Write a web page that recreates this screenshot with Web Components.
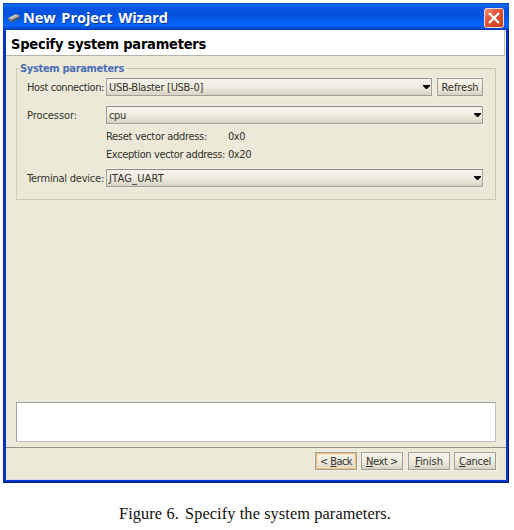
<!DOCTYPE html>
<html lang="en">
<head>
<meta charset="utf-8">
<title>New Project Wizard</title>
<style>
html,body{margin:0;background:#fff}
body{width:514px;height:530px;overflow:hidden}
</style>
</head>
<body>
<wizard-page></wizard-page>
<script>
const define = (name, html, init) => {
  const t = document.createElement('template');
  t.innerHTML = html;
  customElements.define(name, class extends HTMLElement {
    constructor() {
      super();
      this.attachShadow({mode: 'open'}).append(t.content.cloneNode(true));
    }
    connectedCallback() { if (init) init.call(this); }
  });
};

// A single-line label whose letter spacing is adjusted to fill the width in "w".
define('fit-label', `<style>
:host{display:block;white-space:pre;flex:none}
span{display:inline-block}
</style><span><slot></slot></span>`, function () {
  const w = +this.getAttribute('w');
  const s = this.shadowRoot.querySelector('span');
  this.style.width = w + 'px';
  const n = this.textContent.length;
  s.style.letterSpacing = (w - s.getBoundingClientRect().width) / n + 'px';
});

define('title-bar', `<style>
:host{display:flex;align-items:center;box-sizing:border-box;height:27px;padding:0 5px 0 5px;border-radius:2px 2px 0 0;
background:linear-gradient(#0646c8 0,#1768f0 2px,#0657e4 5px,#0450dc 11px,#055cf0 17px,#0666ff 22px,#0558e8 24px,#0138b5 27px);
color:#fff;font:bold 14.5px/22px "Open Sans","Noto Sans",sans-serif;word-spacing:2px;text-shadow:1px 1px 0 #0d3a9a}
.icon{flex:none;margin:1px 3px 0 0}
slot{display:block;padding-top:2px}
.close{flex:none;margin:2px 0 0 auto}
</style>
<svg class="icon" width="12" height="9" viewBox="0 0 12 9"><path d="M0 5L8 1L12 3L4 7Z" fill="#b5afa9"/><path d="M0 5L4 7V9L0 7Z" fill="#7c6f68"/><path d="M4 7L12 3V5L4 9Z" fill="#55535b"/><path d="M2 5L8 2" stroke="#e4e0dc" stroke-width=".8"/></svg>
<slot></slot>
<svg class="close" width="20" height="20" viewBox="0 0 20 20"><defs><linearGradient id="r" x2="1" y2="1"><stop stop-color="#f0947a"/><stop offset=".4" stop-color="#e0583a"/><stop offset="1" stop-color="#c83c14"/></linearGradient></defs><rect x=".5" y=".5" width="19" height="19" rx="2" fill="url(#r)" stroke="#f3dcdc"/><path d="M5 5L15 15M15 5L5 15" stroke="#fff" stroke-width="2.4"/></svg>`);

define('combo-box', `<style>
:host{display:flex;align-items:center;box-sizing:border-box;height:18px;border:1px solid #a3a197;border-top-color:#8f8d85;padding:0 1px 0 2px;box-shadow:0 0 0 1px #f1eee2;
background:linear-gradient(#f6f4ec,#f0ede2 45%,#e7e3d5 70%,#d6d2c5)}
svg{margin-left:auto;flex:none}
</style><slot></slot><svg width="7" height="4" viewBox="0 0 7 4"><path d="M0 0H7V1L4 4H3L0 1Z" fill="#000"/></svg>`);

define('push-button', `<style>
:host{display:flex;align-items:center;justify-content:center;box-sizing:border-box;height:18px;border:1px solid #a3a197;box-shadow:0 0 0 1px #f1eee2;
background:linear-gradient(#f6f4ec,#efece1 45%,#e5e1d3 75%,#d3cfc1)}
:host([focused]){box-shadow:0 0 0 1px #f1eee2,inset 0 0 0 1px #e9c184,inset 0 0 0 2px #f3dfb8}
</style><slot></slot>`);

define('group-box', `<style>
:host{display:block;position:relative;box-sizing:border-box;border:1px solid #c9c6b5;border-left-color:#cfd0bc}
.legend{position:absolute;left:2px;top:-7px;padding:0 2px 0 1px;background:#ece9d8;color:#4a6fb5;font:bold 11px/14px "DejaVu Sans Condensed","DejaVu Sans",sans-serif}
</style><div class="legend"><slot name="legend"></slot></div><slot></slot>`);

define('wizard-window', `<style>
:host{display:flex;flex-direction:column;box-sizing:border-box;width:506px;height:480px;background:linear-gradient(#05153f 0 4px,#0636c4 4px);box-shadow:inset 1px 0 #0a30b4,inset -1px 0 #001c7c,inset 0 -1px #001c7c;
font:11px/14px "DejaVu Sans Condensed","DejaVu Sans",sans-serif;color:#33322c}
.client{flex:1;display:flex;flex-direction:column;margin:0 3px 3px;background:#ece9d8;border-bottom:1px solid #d9dcec}
.head{box-sizing:border-box;height:26px;margin-right:1px;padding:1px 0 0 5px;background:#fff;border-bottom:1px solid #b5b3a8;border-right:1px solid #c7c6be;font:bold 14.5px/26px "DejaVu Sans Condensed","DejaVu Sans",sans-serif;color:#000}
group-box{margin:12px 10px 0 10px;height:132px}
.grid{display:grid;grid-template-columns:79px 377px;grid-template-rows:18px 10px 18px 3px 18px 18px 6px 18px;padding:9px 0 0 10px;align-items:center}
.grid>*{min-width:0}
.grid fit-label,.foot fit-label{padding-top:2px}
.host{display:grid;grid-template-columns:326px 46px;gap:5px}
.v{display:flex}
.note{box-sizing:border-box;margin:202px 10px 0 10px;height:40px;background:#fff;border:1px solid #a0a197;border-right-color:#c0c0bb;border-bottom-color:#c0c0bb}
.foot{display:flex;justify-content:flex-end;border-top:1px solid #92938a;margin-top:5px;padding:4px 10px 0 0}
.foot push-button{width:42px}
</style>
<title-bar><fit-label w="145">New Project Wizard</fit-label></title-bar>
<div class="client">
<div class="head"><fit-label w="195">Specify system parameters</fit-label></div>
<group-box><fit-label slot="legend" w="104">System parameters</fit-label>
<div class="grid">
<fit-label w="77" style="grid-row:1">Host connection:</fit-label>
<div class="host" style="grid-row:1"><combo-box><fit-label w="94">USB-Blaster [USB-0]</fit-label></combo-box><push-button><fit-label w="37">Refresh</fit-label></push-button></div>
<fit-label w="50" style="grid-row:3">Processor:</fit-label>
<combo-box style="grid-row:3"><fit-label w="17">cpu</fit-label></combo-box>
<div class="v" style="grid-row:5;grid-column:2"><fit-label w="101" style="margin-right:21px">Reset vector address:</fit-label><fit-label w="17">0x0</fit-label></div>
<div class="v" style="grid-row:6;grid-column:2"><fit-label w="119" style="margin-right:3px">Exception vector address:</fit-label><fit-label w="23">0x20</fit-label></div>
<fit-label w="77" style="grid-row:8">Terminal device:</fit-label>
<combo-box style="grid-row:8"><fit-label w="55">JTAG_UART</fit-label></combo-box>
</div></group-box>
<div class="note"></div>
<div class="foot">
<push-button focused><fit-label w="32">&lt; <u>B</u>ack</fit-label></push-button>
<push-button style="margin-left:4px"><fit-label w="32"><u>N</u>ext &gt;</fit-label></push-button>
<push-button style="margin-left:5px"><fit-label w="28"><u>F</u>inish</fit-label></push-button>
<push-button style="margin-left:4px"><fit-label w="32"><u>C</u>ancel</fit-label></push-button>
</div></div>`);

define('wizard-page', `<style>
:host{display:flex;flex-direction:column;padding:3px 0 0 3px}
.caption{margin:19px 0 0 116px;font:16.3px/24px "Liberation Serif",serif;color:#111}
.gap{margin-right:2px}
</style><wizard-window></wizard-window>
<div class="caption"><fit-label w="272">Figure 6.<span class="gap"> </span>Specify the system parameters.</fit-label></div>`);
</script>
</body>
</html>
